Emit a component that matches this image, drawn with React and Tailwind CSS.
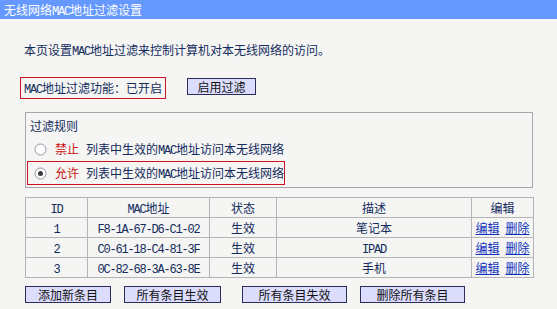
import React from "react";

const cjk = "font-['Noto_Sans_CJK_SC',sans-serif]";

function M({ children }) {
  return (
    <span className="font-['Liberation_Mono',monospace] text-[12px] leading-none tracking-[-1.2px]">{children}</span>
  );
}

function Radio({ checked }) {
  return (
    <svg width="13" height="13" viewBox="0 0 13 13" className="shrink-0">
      <circle cx="6.5" cy="6.5" r="5.5" fill="#ffffff" stroke="#8a95a5" strokeWidth="1" />
      {checked && <circle cx="6.5" cy="6.5" r="2.5" fill="#3a3a3a" />}
    </svg>
  );
}

function Btn({ w, children }) {
  return (
    <button
      className={`${w} h-[17px] bg-[#dcdcfc] border border-[#2c2c5c] text-[12px] leading-[15px] text-[#111] ${cjk}`}
    >
      {children}
    </button>
  );
}

const rows = [
  { id: "1", mac: "F8-1A-67-D6-C1-02", desc: "笔记本" },
  { id: "2", mac: "C0-61-18-C4-81-3F", desc: <M>IPAD</M> },
  { id: "3", mac: "0C-82-68-3A-63-8E", desc: "手机" },
];

export default function App() {
  const cell = "border border-[#b4b4b4] h-[20px] p-0 text-center font-normal leading-[18px]";
  return (
    <div className={`w-[557px] h-[309px] bg-[#f5f5f3] text-[12px] text-[#132c5e] ${cjk} overflow-hidden`}>
      <div className="h-[19px] bg-[#6699ff] text-white leading-[19px] pl-1">
        无线网络<M>MAC</M>地址过滤设置
      </div>

      <p className="mt-[24px] ml-[24px] h-[14px] leading-[14px]">
        本页设置<M>MAC</M>地址过滤来控制计算机对本无线网络的访问。
      </p>

      <div className="mt-[20px] ml-[20px] flex items-start">
        <div className="w-[146px] h-[22px] border border-[#cc1122] pl-[3px] leading-[20px] whitespace-nowrap">
          <M>MAC</M>地址过滤功能：已开启
        </div>
        <div className="ml-[21px] mt-[1px]">
          <Btn w="w-[69px]">启用过滤</Btn>
        </div>
      </div>

      <div className="mt-[13px] ml-[25px] w-[508px] h-[76px] border border-[#a8a8a8] flex flex-col">
        <div className="mt-[6px] ml-[4px] h-[14px] leading-[14px]">过滤规则</div>
        <div className="mt-[9px] ml-[8px] flex items-center h-[14px] whitespace-nowrap">
          <Radio />
          <span className="ml-[8px] text-[#cc1111]">禁止</span>
          <span className="ml-[7px]">列表中生效的<M>MAC</M>地址访问本无线网络</span>
        </div>
        <div className="mt-[5px] ml-[1px] w-[258px] h-[24px] border border-[#cc1122] flex items-center pl-[6px] whitespace-nowrap">
          <Radio checked />
          <span className="ml-[8px] text-[#cc1111]">允许</span>
          <span className="ml-[7px]">列表中生效的<M>MAC</M>地址访问本无线网络</span>
        </div>
      </div>

      <table className="mt-[9px] ml-[25px] w-[508px] border-collapse table-fixed">
        <colgroup>
          <col className="w-[62px]" />
          <col className="w-[122px]" />
          <col className="w-[67px]" />
          <col className="w-[195px]" />
          <col className="w-[62px]" />
        </colgroup>
        <thead>
          <tr>
            <th className={cell}><M>ID</M></th>
            <th className={cell}><M>MAC</M>地址</th>
            <th className={cell}>状态</th>
            <th className={cell}>描述</th>
            <th className={cell}>编辑</th>
          </tr>
        </thead>
        <tbody>
          {rows.map((r) => (
            <tr key={r.id}>
              <td className={cell}><M>{r.id}</M></td>
              <td className={cell}><M>{r.mac}</M></td>
              <td className={cell}>生效</td>
              <td className={cell}>{r.desc}</td>
              <td className={cell}>
                <a className="text-[#1133bb] underline">编辑</a>
                <a className="ml-[6px] text-[#1133bb] underline">删除</a>
              </td>
            </tr>
          ))}
        </tbody>
      </table>

      <div className="mt-[8px] ml-[25px] flex">
        <Btn w="w-[86px]">添加新条目</Btn>
        <div className="ml-[13px]"><Btn w="w-[97px]">所有条目生效</Btn></div>
        <div className="ml-[21px]"><Btn w="w-[105px]">所有条目失效</Btn></div>
        <div className="ml-[13px]"><Btn w="w-[105px]">删除所有条目</Btn></div>
      </div>
    </div>
  );
}
